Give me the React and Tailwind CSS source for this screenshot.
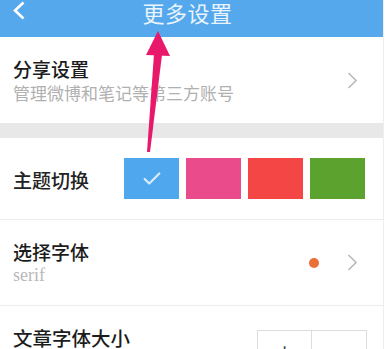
import { Check } from 'lucide-react'

const THEMES = [
  { id: 'blue', color: 'bg-[#4fa7ee]', active: true },
  { id: 'pink', color: 'bg-[#e94b8b]' },
  { id: 'red', color: 'bg-[#f54646]' },
  { id: 'green', color: 'bg-[#5ca22e]' },
]

const cjk = { fontFamily: '"Noto Sans CJK SC", "Noto Sans", sans-serif' }

function Arrow() {
  return (
    <svg width="11" height="17" viewBox="0 0 11 17" className="shrink-0">
      <polyline points="1.5,1 9,8.5 1.5,16" fill="none" stroke="#b9b9b9" strokeWidth="1.6" />
    </svg>
  )
}

export default function App() {
  return (
    <div className="relative h-[349px] w-[386px] overflow-hidden bg-white" style={cjk}>
      <div className="w-[384px] border-r border-[#eeeeee]">
        {/* 顶栏 */}
        <header className="relative flex h-[37px] items-center justify-center bg-[#55a8ec] pb-[13px]">
          <svg width="14" height="19" viewBox="0 0 14 19" className="absolute left-[12px] top-[1px]">
            <polyline points="11.5,1.5 3,9.5 11.5,17.5" fill="none" stroke="#ffffff" strokeWidth="2.6" />
          </svg>
          <h1 className="mr-[8px] text-[22px] leading-none tracking-[0.5px] text-[#eaf4fd]">更多设置</h1>
        </header>

        {/* 分享设置 */}
        <div className="flex h-[86px] items-center justify-between pl-[13px] pr-[25px]">
          <div>
            <div className="text-[19px] font-medium leading-[24px] text-[#1c1c1c]">分享设置</div>
            <div className="mt-[1px] text-[17px] leading-[22px] text-[#b0b0b0]">管理微博和笔记等第三方账号</div>
          </div>
          <Arrow />
        </div>

        <div className="h-[15px] bg-[#e8e8e8]" />

        {/* 主题切换 */}
        <div className="flex h-[82px] items-center border-b border-[#ececec] pl-[13px]">
          <span className="mt-[4px] w-[111px] text-[19px] font-medium text-[#222]">主题切换</span>
          <div className="flex gap-[7px]">
            {THEMES.map((t) => (
              <div key={t.id} className={`flex h-[41px] w-[55px] items-center justify-center ${t.color}`}>
                {t.active && <Check size={22} strokeWidth={2.4} className="text-[#d8ecfc]" />}
              </div>
            ))}
          </div>
        </div>

        {/* 选择字体 */}
        <div className="flex h-[86px] items-center justify-between border-b border-[#ececec] pl-[13px] pr-[25px]">
          <div>
            <div className="text-[19px] font-medium leading-[24px] text-[#1c1c1c]">选择字体</div>
            <div className="text-[18px] leading-[22px] text-[#b8b8b8]" style={{ fontFamily: '"Liberation Serif", "DejaVu Serif", serif' }}>serif</div>
          </div>
          <div className="flex items-center gap-[28px]">
            <span className="h-[10px] w-[10px] rounded-full bg-[#ea6f36]" />
            <Arrow />
          </div>
        </div>

        {/* 文章字体大小 */}
        <div className="flex items-start justify-between pl-[13px] pr-[16px] pt-[20px]">
          <span className="text-[19.5px] font-medium leading-[24px] text-[#1c1c1c]">文章字体大小</span>
          <div className="mt-[4px] flex h-[40px] border border-[#dddddd]">
            <div className="flex w-[54px] items-center justify-center border-r border-[#dddddd] text-[22px] text-[#444]">+</div>
            <div className="flex w-[54px] items-center justify-center text-[22px] text-[#444]">−</div>
          </div>
        </div>
      </div>

      {/* 标注箭头 */}
      <svg className="pointer-events-none absolute left-0 top-0" width="386" height="349" viewBox="0 0 386 349">
        <polygon points="158,31 170,56 146,55" fill="#e8196b" />
        <polygon points="154,54 162,55 150,152 147,152" fill="#e8196b" />
      </svg>
    </div>
  )
}
